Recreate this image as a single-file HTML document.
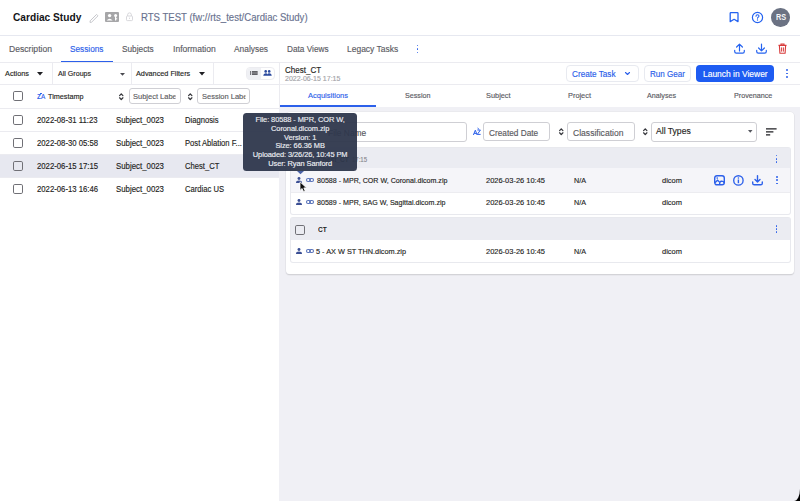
<!DOCTYPE html>
<html><head><meta charset="utf-8">
<style>
*{box-sizing:border-box;margin:0;padding:0}
html,body{width:800px;height:501px;overflow:hidden;background:#fff;font-family:"Liberation Sans",sans-serif;color:#1f1f23}
.a{position:absolute}
.t{position:absolute;line-height:20px;white-space:nowrap;transform-origin:0 0;-webkit-text-stroke:0.15px currentColor}
svg{position:absolute;overflow:visible}
.cb{position:absolute;width:10.4px;height:10.4px;border:1.5px solid #707076;border-radius:1.8px;background:#fff}
.inp{position:absolute;border:1px solid #cfcfd4;border-radius:3px;background:#fff}
</style></head><body>
<div class="t" style="left:12.60px;top:7px;font-size:10.97px;color:#141417;font-weight:bold;-webkit-text-stroke:0;transform:scaleX(0.9259);">Cardiac Study</div>
<svg style="left:89px;top:13px;" width="10" height="9" viewBox="0 0 10 9"><path d="M1.2 7.8 L7.6 1.4 L9 2.8 L2.6 9.2 L1 9.4 Z" fill="none" stroke="#c6c7cc" stroke-width="1"/></svg>
<svg style="left:105px;top:12px;" width="14" height="10" viewBox="0 0 14 10"><rect x="0" y="0" width="14" height="10" rx="1" fill="#a6a6a8"/><circle cx="4.6" cy="3.6" r="1.7" fill="#fff"/><path d="M1.6 8.6 Q4.6 4.9 7.6 8.6 Z" fill="#fff"/><circle cx="10.6" cy="3.4" r="1.5" fill="#fff"/><rect x="10" y="4.5" width="1.2" height="4" fill="#fff"/><rect x="10.6" y="6.3" width="1.6" height="1" fill="#fff"/></svg>
<svg style="left:126px;top:12px;" width="7" height="9" viewBox="0 0 7 9"><path d="M1.6 4 V2.8 A1.9 1.9 0 0 1 5.4 2.8 V4" fill="none" stroke="#d4d4d8" stroke-width="0.9"/><rect x="0.5" y="4" width="6" height="4.6" rx="0.8" fill="none" stroke="#d4d4d8" stroke-width="0.9"/><rect x="3.1" y="5.6" width="0.8" height="1.4" fill="#d4d4d8"/></svg>
<div class="t" style="left:140.80px;top:8px;font-size:10.35px;color:#69728f;transform:scaleX(0.9259);">RTS TEST (fw://rts_test/Cardiac Study)</div>
<svg style="left:729px;top:12px;" width="11" height="11" viewBox="0 0 11 11"><path d="M1.2 1.3 Q1.2 0.6 1.9 0.6 H8.3 Q9 0.6 9 1.3 V9.6 L5.1 7.3 L1.2 9.6 Z" fill="none" stroke="#2563f0" stroke-width="1.3" stroke-linejoin="round"/></svg>
<svg style="left:751px;top:11px;" width="13" height="13" viewBox="0 0 13 13"><circle cx="6.5" cy="6.5" r="5.1" fill="none" stroke="#2563f0" stroke-width="1.2"/><path d="M5 5.2 Q5 3.7 6.5 3.7 Q8 3.7 8 5 Q8 5.9 6.9 6.4 Q6.5 6.6 6.5 7.3" fill="none" stroke="#2563f0" stroke-width="1.1" stroke-linecap="round"/><circle cx="6.5" cy="9" r="0.65" fill="#2563f0"/></svg>
<div class="a" style="left:771.4px;top:8.3px;width:18.5px;height:18.5px;border-radius:50%;background:#6b7283"></div>
<div class="t" style="left:775.80px;top:7px;font-size:8.81px;color:#f4f5f7;font-weight:bold;-webkit-text-stroke:0;transform:scaleX(0.8333);">RS</div>
<div class="a" style="left:0px;top:34.6px;width:800px;height:1.2px;background:#e6e8f0;"></div>
<div class="t" style="left:9.00px;top:39px;font-size:9.29px;color:#5b5b63;transform:scaleX(0.9259);">Description</div>
<div class="t" style="left:70.20px;top:39px;font-size:8.92px;color:#2c60ea;transform:scaleX(0.9259);">Sessions</div>
<div class="t" style="left:122.40px;top:39px;font-size:8.95px;color:#5b5b63;transform:scaleX(0.9259);">Subjects</div>
<div class="t" style="left:172.70px;top:39px;font-size:9.24px;color:#5b5b63;transform:scaleX(0.9259);">Information</div>
<div class="t" style="left:233.90px;top:39px;font-size:9.05px;color:#5b5b63;transform:scaleX(0.9259);">Analyses</div>
<div class="t" style="left:286.60px;top:39px;font-size:8.91px;color:#5b5b63;transform:scaleX(0.9259);">Data Views</div>
<div class="t" style="left:346.60px;top:39px;font-size:9.16px;color:#5b5b63;transform:scaleX(0.9259);">Legacy Tasks</div>
<div class="a" style="left:416.6px;top:44.6px;width:1.5px;height:1.6px;border-radius:1px;background:#2c60ea"></div>
<div class="a" style="left:416.6px;top:48.2px;width:1.5px;height:1.6px;border-radius:1px;background:#2c60ea"></div>
<div class="a" style="left:416.6px;top:51.8px;width:1.5px;height:1.6px;border-radius:1px;background:#2c60ea"></div>
<div class="a" style="left:61px;top:61px;width:52px;height:2px;background:#2c60ea;"></div>
<div class="a" style="left:0px;top:62px;width:800px;height:1px;background:#ebebf0;"></div>
<svg style="left:734px;top:43px;" width="11" height="11" viewBox="0 0 11 11"><path d="M5.5 8 V1.2 M2.6 4 L5.5 1.1 L8.4 4" fill="none" stroke="#2563f0" stroke-width="1.2" stroke-linecap="round" stroke-linejoin="round"/><path d="M0.7 7.4 V8.6 Q0.7 10.2 2.3 10.2 H8.7 Q10.3 10.2 10.3 8.6 V7.4" fill="none" stroke="#2563f0" stroke-width="1.2" stroke-linecap="round"/></svg>
<svg style="left:755.5px;top:43px;" width="11" height="11" viewBox="0 0 11 11"><path d="M5.5 1 V7.8 M2.6 5 L5.5 7.9 L8.4 5" fill="none" stroke="#2563f0" stroke-width="1.2" stroke-linecap="round" stroke-linejoin="round"/><path d="M0.7 7.4 V8.6 Q0.7 10.2 2.3 10.2 H8.7 Q10.3 10.2 10.3 8.6 V7.4" fill="none" stroke="#2563f0" stroke-width="1.2" stroke-linecap="round"/></svg>
<svg style="left:778px;top:43px;" width="9" height="11" viewBox="0 0 9 11"><path d="M0.5 2.4 H8.5 M3 2.2 V1 H6 V2.2" fill="none" stroke="#d83b3b" stroke-width="1.1"/><path d="M1.4 2.6 L1.9 10.3 H7.1 L7.6 2.6" fill="none" stroke="#d83b3b" stroke-width="1.1" stroke-linejoin="round"/><path d="M3.6 4.4 V8.6 M5.4 4.4 V8.6" stroke="#d83b3b" stroke-width="1"/></svg>
<div class="t" style="left:4.70px;top:64px;font-size:7.91px;color:#1f1f23;transform:scaleX(0.9259);">Actions</div>
<svg style="left:37.3px;top:72.3px;" width="6" height="3.4" viewBox="0 0 6 3.4"><path d="M0 0 H6 L3 3.4 Z" fill="#1f1f23"/></svg>
<div class="a" style="left:51.5px;top:63px;width:1px;height:21px;background:#ebebf0;"></div>
<div class="t" style="left:58.00px;top:64px;font-size:7.67px;color:#1f1f23;transform:scaleX(0.9259);">All Groups</div>
<svg style="left:120px;top:72.8px;" width="5" height="2.8" viewBox="0 0 5 2.8"><path d="M0 0 H5 L2.5 2.8 Z" fill="#4a4a50"/></svg>
<div class="a" style="left:131px;top:63px;width:1px;height:21px;background:#ebebf0;"></div>
<div class="t" style="left:136.00px;top:64px;font-size:7.87px;color:#1f1f23;transform:scaleX(0.9259);">Advanced Filters</div>
<svg style="left:199px;top:72.3px;" width="6" height="3.4" viewBox="0 0 6 3.4"><path d="M0 0 H6 L3 3.4 Z" fill="#1f1f23"/></svg>
<div class="a" style="left:213px;top:63px;width:1px;height:21px;background:#ebebf0;"></div>
<div class="a" style="left:246.3px;top:67px;width:28.4px;height:13.4px;border-radius:4px;background:#fff;border:1px solid #ececf0"></div>
<div class="a" style="left:247px;top:67.7px;width:14px;height:12px;border-radius:3.5px 0 0 3.5px;background:#eff0f4"></div>
<svg style="left:249.5px;top:71px;" width="8" height="4" viewBox="0 0 8 4"><rect x="0" y="0" width="1.2" height="4" fill="#7a7a80"/><rect x="2" y="0" width="5.6" height="4" fill="#58585e"/><path d="M1.6 1.3 H7.6 M1.6 2.7 H7.6" stroke="#c8c8cc" stroke-width="0.4"/></svg>
<svg style="left:263.2px;top:70.3px;" width="9" height="6" viewBox="0 0 9 6"><circle cx="2.7" cy="1.4" r="1.3" fill="#2b4a9e"/><circle cx="6.2" cy="1.4" r="1.3" fill="#2b4a9e"/><path d="M0.2 5.8 Q0.4 3.2 2.7 3.2 Q4.4 3.2 4.5 4.4 Q4.6 3.2 6.2 3.2 Q8.6 3.2 8.7 5.8 Z" fill="#2b4a9e"/></svg>
<div class="a" style="left:0px;top:84px;width:280px;height:1px;background:#ebebf0;"></div>
<div class="cb" style="left:13px;top:91px"></div>
<div class="t" style="left:36.60px;top:87px;font-size:6.91px;color:#2c60ea;font-weight:bold;-webkit-text-stroke:0;transform:scaleX(0.9259);"><span style="position:relative">Z</span></div>
<div class="t" style="left:40.60px;top:87px;font-size:6.91px;color:#2c60ea;transform:scaleX(0.9259);">A</div>
<div class="a" style="left:39.5px;top:92.8px;width:2.5px;height:0.8px;background:#2c60ea;"></div>
<div class="t" style="left:48.00px;top:87px;font-size:7.83px;color:#1f1f23;transform:scaleX(0.9259);">Timestamp</div>
<svg style="left:118.8px;top:92.9px;" width="4.5" height="7.4" viewBox="0 0 4.5 7.4"><path d="M0.6 2.6 L2.25 0.8 L3.9 2.6 M0.6 4.8 L2.25 6.6 L3.9 4.8" fill="none" stroke="#36373c" stroke-width="1.25" stroke-linecap="round" stroke-linejoin="round"/></svg>
<div class="inp" style="left:128.5px;top:88.2px;width:52.2px;height:16.2px;overflow:hidden"></div>
<div class="t" style="left:133.40px;top:87px;font-size:8.10px;color:#5c5c62;transform:scaleX(0.9259);"><span style="display:inline-block;width:45.9px;overflow:hidden;vertical-align:top">Subject Label</span></div>
<svg style="left:188.1px;top:92.9px;" width="4.5" height="7.4" viewBox="0 0 4.5 7.4"><path d="M0.6 2.6 L2.25 0.8 L3.9 2.6 M0.6 4.8 L2.25 6.6 L3.9 4.8" fill="none" stroke="#36373c" stroke-width="1.25" stroke-linecap="round" stroke-linejoin="round"/></svg>
<div class="inp" style="left:197.3px;top:88.2px;width:52.6px;height:16.2px"></div>
<div class="t" style="left:202.00px;top:87px;font-size:8.10px;color:#5c5c62;transform:scaleX(0.9259);"><span style="display:inline-block;width:47px;overflow:hidden;vertical-align:top">Session Label</span></div>
<div class="a" style="left:0px;top:107.5px;width:280px;height:1px;background:#ebebf0;"></div>
<div class="a" style="left:0px;top:154px;width:279px;height:23px;background:#e7e8f0;"></div>
<div class="cb" style="left:13px;top:114.8px;background:transparent"></div>
<div class="t" style="left:36.80px;top:110px;font-size:8.37px;color:#1f1f23;transform:scaleX(0.9259);">2022-08-31 11:23</div>
<div class="t" style="left:116.10px;top:110px;font-size:8.48px;color:#1f1f23;transform:scaleX(0.9259);">Subject_0023</div>
<div class="t" style="left:185.40px;top:111px;font-size:8.26px;color:#1f1f23;transform:scaleX(0.9259);">Diagnosis</div>
<div class="a" style="left:0px;top:131px;width:279px;height:1px;background:#ebebf0;"></div>
<div class="cb" style="left:13px;top:137.8px;background:transparent"></div>
<div class="t" style="left:36.80px;top:133px;font-size:8.37px;color:#1f1f23;transform:scaleX(0.9259);">2022-08-30 05:58</div>
<div class="t" style="left:116.10px;top:133px;font-size:8.48px;color:#1f1f23;transform:scaleX(0.9259);">Subject_0023</div>
<div class="t" style="left:185.40px;top:134px;font-size:8.26px;color:#1f1f23;transform:scaleX(0.9259);">Post Ablation F...</div>
<div class="a" style="left:0px;top:154px;width:279px;height:1px;background:#ebebf0;"></div>
<div class="cb" style="left:13px;top:160.8px;background:transparent"></div>
<div class="t" style="left:36.80px;top:156px;font-size:8.37px;color:#1f1f23;transform:scaleX(0.9259);">2022-06-15 17:15</div>
<div class="t" style="left:116.10px;top:156px;font-size:8.48px;color:#1f1f23;transform:scaleX(0.9259);">Subject_0023</div>
<div class="t" style="left:185.40px;top:157px;font-size:8.26px;color:#1f1f23;transform:scaleX(0.9259);">Chest_CT</div>
<div class="a" style="left:0px;top:177px;width:279px;height:1px;background:#ebebf0;"></div>
<div class="cb" style="left:13px;top:183.8px;background:transparent"></div>
<div class="t" style="left:36.80px;top:179px;font-size:8.37px;color:#1f1f23;transform:scaleX(0.9259);">2022-06-13 16:46</div>
<div class="t" style="left:116.10px;top:179px;font-size:8.48px;color:#1f1f23;transform:scaleX(0.9259);">Subject_0023</div>
<div class="t" style="left:185.40px;top:180px;font-size:8.26px;color:#1f1f23;transform:scaleX(0.9259);">Cardiac US</div>
<div class="a" style="left:279px;top:63px;width:1px;height:44px;background:#ebebf0;"></div>
<div class="t" style="left:284.50px;top:60px;font-size:8.69px;color:#1f1f23;transform:scaleX(0.9259);">Chest_CT</div>
<div class="t" style="left:284.50px;top:69px;font-size:7.59px;color:#a3a3a8;transform:scaleX(0.9259);">2022-06-15 17:15</div>
<div class="a" style="left:565.8px;top:65.2px;width:73px;height:17.2px;border:1px solid #e8eaf0;border-radius:4px"></div>
<div class="t" style="left:571.90px;top:64px;font-size:8.86px;color:#2c60ea;transform:scaleX(0.9259);">Create Task</div>
<svg style="left:625px;top:72.3px;" width="5" height="3" viewBox="0 0 5 3"><path d="M0.5 0.5 L2.5 2.5 L4.5 0.5" fill="none" stroke="#2c60ea" stroke-width="1.1" stroke-linecap="round" stroke-linejoin="round"/></svg>
<div class="a" style="left:643.7px;top:65.2px;width:47.6px;height:17.2px;border:1px solid #e8eaf0;border-radius:4px"></div>
<div class="t" style="left:650.20px;top:64px;font-size:8.72px;color:#2c60ea;transform:scaleX(0.9259);">Run Gear</div>
<div class="a" style="left:695.8px;top:65.3px;width:78.4px;height:16.9px;border-radius:4px;background:#1e5cf2"></div>
<div class="t" style="left:702.60px;top:64px;font-size:9.13px;color:#fff;transform:scaleX(0.9259);">Launch in Viewer</div>
<div class="a" style="left:786px;top:69.4px;width:1.5px;height:1.6px;border-radius:1px;background:#2c60ea"></div>
<div class="a" style="left:786px;top:72.8px;width:1.5px;height:1.6px;border-radius:1px;background:#2c60ea"></div>
<div class="a" style="left:786px;top:76.2px;width:1.5px;height:1.6px;border-radius:1px;background:#2c60ea"></div>
<div class="a" style="left:280px;top:84px;width:520px;height:1px;background:#ebebf0;"></div>
<div class="t" style="left:308.25px;top:86px;font-size:8.10px;color:#2c60ea;transform:scaleX(0.9259);">Acquisitions</div>
<div class="t" style="left:404.50px;top:86px;font-size:7.74px;color:#5b5b63;transform:scaleX(0.9259);">Session</div>
<div class="t" style="left:486.40px;top:86px;font-size:7.97px;color:#5b5b63;transform:scaleX(0.9259);">Subject</div>
<div class="t" style="left:567.70px;top:86px;font-size:7.98px;color:#5b5b63;transform:scaleX(0.9259);">Project</div>
<div class="t" style="left:647.00px;top:86px;font-size:7.72px;color:#5b5b63;transform:scaleX(0.9259);">Analyses</div>
<div class="t" style="left:733.60px;top:86px;font-size:7.78px;color:#5b5b63;transform:scaleX(0.9259);">Provenance</div>
<div class="a" style="left:280px;top:105px;width:96px;height:2px;background:#2c60ea;"></div>
<div class="a" style="left:279px;top:107px;width:521px;height:394px;background:#f0f0f5;"></div>
<div class="a" style="left:286px;top:112px;width:508.3px;height:161.8px;background:#fff;border-radius:4px;box-shadow:0 0 0 0.6px #e3e3e8,0 1px 1.2px rgba(0,0,0,0.22)"></div>
<div class="inp" style="left:292px;top:122px;width:175px;height:19.6px"></div>
<div class="t" style="left:327.50px;top:123px;font-size:9.07px;color:#55555c;transform:scaleX(0.9259);">File Name</div>
<svg style="left:473.3px;top:128px;" width="8" height="7.5" viewBox="0 0 8 7.5"><path d="M0.4 7 L2.3 2.2 L4.2 7 M1.1 5.4 H3.5" fill="none" stroke="#2c60ea" stroke-width="1"/><path d="M4.3 2 H7.4 L4.3 6.4 H7.6" fill="none" stroke="#2c60ea" stroke-width="1"/><path d="M4.5 0 L6 1.2" stroke="#2c60ea" stroke-width="0.9"/></svg>
<div class="inp" style="left:483.2px;top:121.8px;width:67.3px;height:19.6px"></div>
<div class="t" style="left:488.80px;top:123px;font-size:8.94px;color:#5a5a60;transform:scaleX(0.9259);">Created Date</div>
<svg style="left:558.8px;top:127.5px;" width="4.5" height="7.4" viewBox="0 0 4.5 7.4"><path d="M0.6 2.6 L2.25 0.8 L3.9 2.6 M0.6 4.8 L2.25 6.6 L3.9 4.8" fill="none" stroke="#36373c" stroke-width="1.25" stroke-linecap="round" stroke-linejoin="round"/></svg>
<div class="inp" style="left:567px;top:121.8px;width:67.5px;height:19.6px"></div>
<div class="t" style="left:572.50px;top:123px;font-size:9.26px;color:#5a5a60;transform:scaleX(0.9259);">Classification</div>
<svg style="left:642.8px;top:127.5px;" width="4.5" height="7.4" viewBox="0 0 4.5 7.4"><path d="M0.6 2.6 L2.25 0.8 L3.9 2.6 M0.6 4.8 L2.25 6.6 L3.9 4.8" fill="none" stroke="#36373c" stroke-width="1.25" stroke-linecap="round" stroke-linejoin="round"/></svg>
<div class="inp" style="left:651.3px;top:121.6px;width:106.2px;height:20.3px"></div>
<div class="t" style="left:656.00px;top:121px;font-size:9.29px;color:#1f1f23;transform:scaleX(0.9259);">All Types</div>
<svg style="left:748px;top:129.5px;" width="4.5" height="2.8" viewBox="0 0 4.5 2.8"><path d="M0 0 H4.5 L2.25 2.8 Z" fill="#55575e"/></svg>
<svg style="left:766.3px;top:128px;" width="11" height="8" viewBox="0 0 11 8"><path d="M0 0.8 H10.6 M0 3.8 H7.4 M0 6.8 H4.2" stroke="#1f1f23" stroke-width="1.3"/></svg>
<div class="a" style="left:290.5px;top:148px;width:499.5px;height:66px;background:#fff;box-shadow:0 0 0 1px #e8e9ee;border-radius:2px"></div>
<div class="a" style="left:290.5px;top:148px;width:499.5px;height:20px;background:#ebecf2;"></div>
<div class="cb" style="left:295px;top:153px;background:transparent"></div>
<div class="t" style="left:318.00px;top:150px;font-size:7.13px;color:#1f1f23;font-weight:bold;-webkit-text-stroke:0;transform:scaleX(0.9259);">Chest_CT</div>
<div class="t" style="left:356.50px;top:150px;font-size:6.48px;color:#8a8a90;transform:scaleX(0.9259);left:351.5px">17:15</div>
<div class="a" style="left:775.9px;top:154.9px;width:1.6px;height:1.6px;border-radius:1px;background:#2c60ea"></div>
<div class="a" style="left:775.9px;top:158.0px;width:1.6px;height:1.6px;border-radius:1px;background:#2c60ea"></div>
<div class="a" style="left:775.9px;top:161.1px;width:1.6px;height:1.6px;border-radius:1px;background:#2c60ea"></div>
<div class="a" style="left:290.5px;top:168px;width:499.5px;height:23.5px;background:#f5f5f9;"></div>
<div class="a" style="left:290.5px;top:191.5px;width:499.5px;height:1px;background:#ececf0;"></div>
<svg style="left:296px;top:177px;" width="6" height="6" viewBox="0 0 6 6"><circle cx="3" cy="1.5" r="1.45" fill="#3b4f94"/><path d="M0 6 Q0 3.6 3 3.6 Q6 3.6 6 6 Z" fill="#3b4f94"/></svg>
<svg style="left:305.6px;top:178.2px;" width="8" height="4" viewBox="0 0 8 4"><rect x="0.5" y="0.5" width="4" height="3" rx="1.5" fill="none" stroke="#5b75bb" stroke-width="1.1"/><rect x="3.5" y="0.5" width="4" height="3" rx="1.5" fill="none" stroke="#5b75bb" stroke-width="1.1"/></svg>
<div class="t" style="left:316.60px;top:171px;font-size:7.67px;color:#1f1f23;transform:scaleX(0.9259);">80588 - MPR, COR W, Coronal.dicom.zip</div>
<div class="t" style="left:486.00px;top:171px;font-size:8.07px;color:#1f1f23;transform:scaleX(0.9259);">2026-03-26 10:45</div>
<div class="t" style="left:574.00px;top:171px;font-size:7.78px;color:#1f1f23;transform:scaleX(0.9259);">N/A</div>
<div class="t" style="left:662.00px;top:171px;font-size:8.10px;color:#1f1f23;transform:scaleX(0.9259);">dicom</div>
<svg style="left:296px;top:199px;" width="6" height="6" viewBox="0 0 6 6"><circle cx="3" cy="1.5" r="1.45" fill="#3b4f94"/><path d="M0 6 Q0 3.6 3 3.6 Q6 3.6 6 6 Z" fill="#3b4f94"/></svg>
<svg style="left:305.6px;top:200.2px;" width="8" height="4" viewBox="0 0 8 4"><rect x="0.5" y="0.5" width="4" height="3" rx="1.5" fill="none" stroke="#5b75bb" stroke-width="1.1"/><rect x="3.5" y="0.5" width="4" height="3" rx="1.5" fill="none" stroke="#5b75bb" stroke-width="1.1"/></svg>
<div class="t" style="left:316.60px;top:193px;font-size:7.67px;color:#1f1f23;transform:scaleX(0.9259);">80589 - MPR, SAG W, Sagittal.dicom.zip</div>
<div class="t" style="left:486.00px;top:193px;font-size:8.07px;color:#1f1f23;transform:scaleX(0.9259);">2026-03-26 10:45</div>
<div class="t" style="left:574.00px;top:193px;font-size:7.78px;color:#1f1f23;transform:scaleX(0.9259);">N/A</div>
<div class="t" style="left:662.00px;top:193px;font-size:8.10px;color:#1f1f23;transform:scaleX(0.9259);">dicom</div>
<svg style="left:713.5px;top:174.7px;" width="11" height="10.5" viewBox="0 0 11 10.5"><rect x="0.7" y="0.7" width="9.6" height="9.1" rx="2.2" fill="none" stroke="#2c60ea" stroke-width="1.4"/><circle cx="3.2" cy="3.1" r="0.8" fill="#2c60ea"/><path d="M0.8 7.8 L3.6 5.2 L5.8 7.4" fill="none" stroke="#2c60ea" stroke-width="1.3"/><path d="M5.6 9.6 Q5.4 6.4 7.6 6.2 Q9.8 6.2 10.2 8" fill="none" stroke="#2c60ea" stroke-width="1.3"/></svg>
<svg style="left:732.6px;top:174.7px;" width="11" height="11" viewBox="0 0 11 11"><circle cx="5.4" cy="5.4" r="4.7" fill="none" stroke="#2c60ea" stroke-width="1.35"/><rect x="4.7" y="4.5" width="1.4" height="3.7" fill="#2c60ea"/><circle cx="5.4" cy="3" r="0.8" fill="#2c60ea"/></svg>
<svg style="left:751.8px;top:175px;" width="11" height="10.5" viewBox="0 0 11 10.5"><path d="M5.5 0.6 V7 M3 4.6 L5.5 7.1 L8 4.6" fill="none" stroke="#2c60ea" stroke-width="1.4" stroke-linecap="round" stroke-linejoin="round"/><path d="M0.7 7 V8.2 Q0.7 9.8 2.3 9.8 H8.7 Q10.3 9.8 10.3 8.2 V7" fill="none" stroke="#2c60ea" stroke-width="1.4" stroke-linecap="round"/></svg>
<div class="a" style="left:776.3px;top:176.0px;width:1.4px;height:1.5px;border-radius:1px;background:#2c60ea"></div>
<div class="a" style="left:776.3px;top:179.3px;width:1.4px;height:1.5px;border-radius:1px;background:#2c60ea"></div>
<div class="a" style="left:776.3px;top:182.6px;width:1.4px;height:1.5px;border-radius:1px;background:#2c60ea"></div>
<div class="a" style="left:290.5px;top:218px;width:499.5px;height:44px;background:#fff;box-shadow:0 0 0 1px #e8e9ee;border-radius:2px"></div>
<div class="a" style="left:290.5px;top:218px;width:499.5px;height:21.5px;background:#ebecf2;"></div>
<div class="cb" style="left:295px;top:224.8px;background:transparent"></div>
<div class="t" style="left:317.60px;top:220px;font-size:7.13px;color:#1f1f23;font-weight:bold;-webkit-text-stroke:0;transform:scaleX(0.9259);">CT</div>
<div class="a" style="left:775.9px;top:225.2px;width:1.6px;height:1.6px;border-radius:1px;background:#2c60ea"></div>
<div class="a" style="left:775.9px;top:228.3px;width:1.6px;height:1.6px;border-radius:1px;background:#2c60ea"></div>
<div class="a" style="left:775.9px;top:231.4px;width:1.6px;height:1.6px;border-radius:1px;background:#2c60ea"></div>
<svg style="left:296px;top:247.5px;" width="6" height="6" viewBox="0 0 6 6"><circle cx="3" cy="1.5" r="1.45" fill="#3b4f94"/><path d="M0 6 Q0 3.6 3 3.6 Q6 3.6 6 6 Z" fill="#3b4f94"/></svg>
<svg style="left:305.6px;top:248.7px;" width="8" height="4" viewBox="0 0 8 4"><rect x="0.5" y="0.5" width="4" height="3" rx="1.5" fill="none" stroke="#5b75bb" stroke-width="1.1"/><rect x="3.5" y="0.5" width="4" height="3" rx="1.5" fill="none" stroke="#5b75bb" stroke-width="1.1"/></svg>
<div class="t" style="left:316.00px;top:242px;font-size:7.91px;color:#1f1f23;transform:scaleX(0.9259);">5 - AX W ST THN.dicom.zip</div>
<div class="t" style="left:486.00px;top:242px;font-size:8.07px;color:#1f1f23;transform:scaleX(0.9259);">2026-03-26 10:45</div>
<div class="t" style="left:574.00px;top:242px;font-size:7.78px;color:#1f1f23;transform:scaleX(0.9259);">N/A</div>
<div class="t" style="left:662.00px;top:242px;font-size:8.10px;color:#1f1f23;transform:scaleX(0.9259);">dicom</div>
<div class="a" style="left:243.3px;top:112.7px;width:113.7px;height:58px;border-radius:3.5px;background:rgba(46,55,76,0.95)"></div>
<svg style="left:296.5px;top:170.6px;" width="7" height="3.4" viewBox="0 0 7 3.4"><path d="M0 0 H7 L3.5 3.2 Z" fill="#4a62a6"/></svg>
<div class="t" style="left:243.3px;width:113.7px;text-align:center;top:110px;font-size:7.45px;letter-spacing:-0.08px;color:#eceef3">File: 80588 - MPR, COR W,</div>
<div class="t" style="left:243.3px;width:113.7px;text-align:center;top:119px;font-size:7.45px;letter-spacing:-0.08px;color:#eceef3">Coronal.dicom.zip</div>
<div class="t" style="left:243.3px;width:113.7px;text-align:center;top:128px;font-size:7.45px;letter-spacing:-0.08px;color:#eceef3">Version: 1</div>
<div class="t" style="left:243.3px;width:113.7px;text-align:center;top:136px;font-size:7.45px;letter-spacing:-0.08px;color:#eceef3">Size: 66.36 MB</div>
<div class="t" style="left:243.3px;width:113.7px;text-align:center;top:145px;font-size:7.45px;letter-spacing:-0.08px;color:#eceef3">Uploaded: 3/26/26, 10:45 PM</div>
<div class="t" style="left:243.3px;width:113.7px;text-align:center;top:154px;font-size:7.45px;letter-spacing:-0.08px;color:#eceef3">User: Ryan Sanford</div>
<svg style="left:298.8px;top:180.6px;" width="9" height="12" viewBox="0 0 9 12"><path d="M1 0.8 V9.4 L3.1 7.5 L4.6 10.8 L6.2 10 L4.8 6.9 L7.6 6.9 Z" fill="#0d0d0d" stroke="#fff" stroke-width="0.8" stroke-linejoin="round"/></svg>
<div class="a" style="left:785px;top:481px;width:15px;height:20px;background:#000"></div>
<div class="a" style="left:760px;top:461px;width:40px;height:40px;border-radius:0 0 6px 0 / 0 0 12px 0;background:#f0f0f5"></div>
</body></html>
